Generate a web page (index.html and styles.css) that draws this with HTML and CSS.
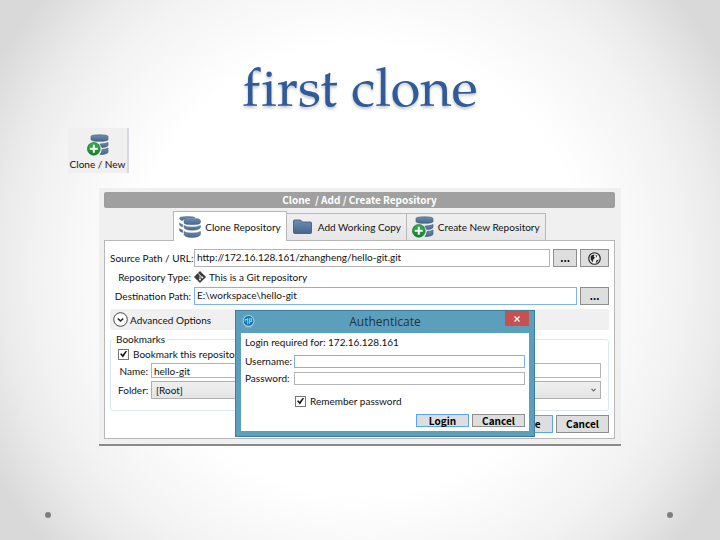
FILE: index.html
```html
<!DOCTYPE html>
<html lang="en">
<head>
<meta charset="utf-8">
<title>first clone</title>
<link rel="stylesheet" href="styles.css">
</head>
<body>
<svg class="defs" aria-hidden="true">
  <defs>
    <linearGradient id="steel" x1="0" y1="0" x2="0" y2="1"><stop offset="0" stop-color="#6d8fb5"/><stop offset="1" stop-color="#46658a"/></linearGradient>
    <linearGradient id="green" x1="0" y1="0" x2="0" y2="1"><stop offset="0" stop-color="#35b04a"/><stop offset="1" stop-color="#12802a"/></linearGradient>
    <symbol id="db-add" viewBox="0 0 22 22">
      <g fill="url(#steel)" stroke="#3c5573" stroke-width=".6">
        <path d="M4 2.500Q4 .8 12.500 .8T21 2.500V5.500Q21 7.300 12.500 7.300T4 5.500Z"/>
        <path d="M13 10Q19 9.800 21 8.500V11.500Q20 13.300 14.800 13.600Z"/>
        <path d="M15 15.500Q19 15.300 21 14V18.500Q19 20.500 13 20.600Q15 18.500 15 15.500Z"/>
      </g>
      <circle cx="6.800" cy="14.800" r="6.400" fill="url(#green)" stroke="#0c7424" stroke-width=".6"/>
      <path d="M6.800 10.800V18.800M2.800 14.800H10.800" stroke="#fff" stroke-width="2"/>
    </symbol>
  </defs>
</svg>
<main class="slide">
  <h1 class="headline">first clone</h1>
  <button class="tile" type="button">
    <svg class="tile-icon"><use href="#db-add"/></svg>
    <span>Clone / New</span>
  </button>

  <section class="window">
    <h2 class="window-title">Clone&nbsp; / Add / Create Repository</h2>
    <nav class="tabs">
      <button class="tab tab-active" type="button">
        <svg class="tab-icon" viewBox="0 0 22 22">
          <g fill="url(#steel)" stroke="#3c5573" stroke-width=".4">
            <path d="M.5 2.300Q.5 .5 8 .5T16 1.800Q8 1.200 4.300 3.500L3.500 4.800Q.5 4 .5 2.300Z"/>
            <path d="M.5 7Q2 8.300 3.700 8.500V11Q.5 10.300 .5 8.800ZM.5 12.500Q2 13.800 3.700 14V16.500Q.5 15.800 .5 14.300Z"/>
            <path d="M5 4.500Q5 2.300 13 2.300T21.500 4.500V6.500Q21.500 8.700 13 8.700T5 6.500Z"/>
            <path d="M5 9.500Q8 11 13 11T21.500 9.500V11.500Q20 14.200 13 14.200T5 11.500Z"/>
            <path d="M5 15.500Q8 17 13 17T21.500 15.500V18.500Q20 21.500 13 21.500T5 18.500Z"/>
          </g>
        </svg>
        <span>Clone Repository</span>
      </button>
      <button class="tab" type="button">
        <svg class="tab-icon" viewBox="0 0 22 22"><path d="M1.500 5Q1.500 4 2.500 4H8.500L10.500 6H18.500Q19.500 6 19.500 7V16.500Q19.500 17.500 18.500 17.500H2.500Q1.500 17.500 1.500 16.500Z" fill="url(#steel)" stroke="#3c5573" stroke-width=".8"/></svg>
        <span>Add Working Copy</span>
      </button>
      <button class="tab" type="button">
        <svg class="tab-icon"><use href="#db-add"/></svg>
        <span>Create New Repository</span>
      </button>
    </nav>

    <form class="panel">
      <div class="source">
        <label class="caption" for="source">Source Path / URL:</label>
        <div class="line">
          <input class="field" id="source" type="text" value="http://172.16.128.161/zhangheng/hello-git.git">
          <button class="btn btn-dots" type="button">...</button>
          <button class="btn btn-side" type="button" aria-label="Browse remote">
            <svg class="globe" viewBox="0 0 12 12"><circle cx="6" cy="6" r="5.300" fill="#eee" stroke="#222" stroke-width="1.100"/><path d="M2.500 4Q4 2 6 2.300L5.300 4.300L6.500 5.300L4.800 7L4.500 9.500Q2 7.500 2.500 4ZM7 2.500L8.500 3.500L7.500 5ZM8 7.500L10 7L8 10L7.200 9.500Z" fill="#222"/></svg>
          </button>
        </div>
        <span class="caption">Repository Type:</span>
        <div class="line kind">
          <svg class="git" viewBox="0 0 12 12"><path d="M6 .2L11.800 6L6 11.800L.2 6Z" fill="#3c3c3c" stroke="#3c3c3c" stroke-width=".4" stroke-linejoin="round"/><path d="M4.300 2.500L6 4.200V8.500M6 4.500L8.200 6.500" fill="none" stroke="#fff" stroke-width=".8"/><circle cx="6" cy="8.600" r=".9" fill="#fff"/><circle cx="8.300" cy="6.400" r=".9" fill="#fff"/></svg>
          <span>This is a Git repository</span>
        </div>
        <label class="caption" for="dest">Destination Path:</label>
        <div class="line">
          <input class="field field-focus" id="dest" type="text" value="E:\workspace\hello-git">
          <button class="btn btn-side" type="button">...</button>
        </div>
      </div>

      <button class="advanced" type="button">
        <svg class="chevron" viewBox="0 0 15 15"><circle cx="7.500" cy="7.500" r="6.800" fill="#fff" stroke="#333" stroke-width=".9"/><path d="M4.800 6.500L7.500 9L10.200 6.500" fill="none" stroke="#222" stroke-width="1.600"/></svg>
        <span>Advanced Options</span>
      </button>

      <fieldset class="bookmarks">
        <legend class="legend">Bookmarks</legend>
        <label class="check"><input class="box" type="checkbox" checked><span>Bookmark this repository</span></label>
        <div class="pairs">
          <label class="caption" for="name">Name:</label>
          <input class="field field-small" id="name" type="text" value="hello-git">
          <label class="caption" for="folder">Folder:</label>
          <div class="pick">
            <select class="select" id="folder"><option>[Root]</option></select>
            <svg class="arrow" viewBox="0 0 5 4"><path d="M.5 .8L2.500 2.800L4.500 .8" fill="none" stroke="#666" stroke-width="1.200"/></svg>
          </div>
        </div>
      </fieldset>

      <div class="actions">
        <button class="btn btn-main btn-default" type="button">Clone</button>
        <button class="btn btn-main" type="button">Cancel</button>
      </div>
    </form>

    <div class="modal" role="dialog" aria-labelledby="auth-title">
      <header class="modal-bar">
        <svg class="app-icon" viewBox="0 0 12 12"><path d="M4 9H8L9.500 11.700H2.500Z" fill="#8ea6b4"/><circle cx="6" cy="5.500" r="5" fill="#1272ac" stroke="#b5cfdb"/><path d="M5.300 2.500V8.500M3 6V4.300H5M7 8V3.500H8.800V6H7" fill="none" stroke="#6fdcf5" stroke-width="1"/></svg>
        <h3 class="modal-title" id="auth-title">Authenticate</h3>
        <button class="close" type="button" aria-label="Close"><svg class="cross" viewBox="0 0 6 6"><path d="M.5 .5L5.500 5.500M5.500 .5L.5 5.500" stroke="#fff" stroke-width="1.300"/></svg></button>
      </header>
      <form class="modal-body">
        <p class="note">Login required for: 172.16.128.161</p>
        <div class="login">
          <label for="user">Username:</label>
          <input class="field field-login field-focus" id="user" type="text">
          <label for="pass">Password:</label>
          <input class="field field-login" id="pass" type="password">
        </div>
        <label class="check remember"><input class="box" type="checkbox" checked><span>Remember password</span></label>
        <div class="modal-actions">
          <button class="btn btn-login btn-default" type="button">Login</button>
          <button class="btn btn-login" type="button">Cancel</button>
        </div>
      </form>
    </div>
  </section>

  <footer class="dots"><span class="dot"></span><span class="dot"></span></footer>
</main>
</body>
</html>
```
FILE: styles.css
```css
* { box-sizing: border-box; }
body { margin: 0; }
.defs { position: absolute; width: 0; height: 0; }
button, input, select { font: inherit; color: inherit; margin: 0; border-radius: 0; }
button { white-space: nowrap; }
svg { display: block; flex: none; }

.slide {
  min-height: 100vh;
  display: flex;
  flex-direction: column;
  font: 10px/14px Lato, "Open Sans", sans-serif;
  color: #111;
  background: radial-gradient(circle farthest-corner, #fff 50%, #f3f3f3 71%, #ebebeb 80%, #d9d9d9 93%);
}
.headline {
  margin: 60px 0 0;
  text-align: center;
  font: 54px/68px "Palatino Linotype", "TeX Gyre Pagella", Palatino, "Liberation Serif", serif;
  font-variant-ligatures: none;
  color: #2f5b9b;
  text-shadow: 0 2px 3px rgba(0, 0, 0, .25);
}
.tile {
  align-self: flex-start;
  margin-left: 68px;
  width: 61px;
  height: 45px;
  padding: 6px 0 0;
  border: 0;
  border-right: 2px solid #d5d8dc;
  background: #f0f0f0;
  display: flex;
  flex-direction: column;
  align-items: center;
  gap: 1px;
}
.tile-icon { width: 22px; height: 22px; }

.window {
  position: relative;
  margin: 15px 99px 0;
  padding: 4px 6px 5px 5px;
  background: #f0f0f0;
  border-bottom: 2px solid #8a8a8a;
}
.window-title {
  margin: 0;
  border-radius: 2px;
  background: #a0a0a0;
  color: #fff;
  text-align: center;
  font: bold 10px/16px "Noto Sans CJK SC", "Open Sans", sans-serif;
}
.tabs {
  display: flex;
  justify-content: center;
  align-items: flex-end;
  padding-top: 3px;
}
.tab {
  display: flex;
  align-items: center;
  gap: 4px;
  height: 27px;
  padding: 0 5px;
  border: 1px solid #b8b8b8;
  border-left: 0;
  border-bottom: 0;
  background: linear-gradient(#f0f0f0, #e6e6e6);
}
.tab-active {
  position: relative;
  height: 30px;
  margin-bottom: -1px;
  border-left: 1px solid #b8b8b8;
  background: #fff;
}
.tab-icon { width: 22px; height: 22px; }

.panel {
  padding: 8px 5px 5px;
  border: 1px solid #b8b8b8;
  background: #fff;
}
.source {
  display: grid;
  grid-template-columns: 81px 1fr;
  column-gap: 3px;
  align-items: center;
}
.caption { text-align: right; white-space: nowrap; }
.line { display: flex; gap: 3px; }
.kind { align-items: center; height: 20px; }
.git { width: 12px; height: 12px; }
.field {
  flex: 1;
  min-width: 0;
  width: 100%;
  height: 18px;
  padding: 0 2px 2px;
  border: 1px solid #b4b4b4;
  background: #fff;
  outline: 0;
}
.field-focus { border-color: #7eb4ea; }
.btn {
  display: flex;
  align-items: center;
  justify-content: center;
  height: 18px;
  padding: 0;
  border: 1px solid #8e8e8e;
  background: #dedede;
  color: #000;
  font-family: "Noto Sans CJK SC", "Open Sans", sans-serif;
  font-weight: bold;
}
.btn-dots { width: 24px; }
.btn-side { width: 29px; }
.btn-default { border-color: #5aa5f0; }
.globe { width: 13px; height: 13px; }

.advanced {
  display: flex;
  align-items: center;
  gap: 2px;
  width: 100%;
  height: 21px;
  margin-top: 4px;
  padding: 0 3px;
  border: 0;
  border-radius: 2px;
  background: #f0f0f0;
}
.chevron { width: 15px; height: 15px; }

.bookmarks {
  min-width: 0;
  margin: 2px 0 0;
  padding: 0 7px 11px;
  border: 1px solid #dce6ec;
  border-radius: 3px;
}
.legend { margin-left: -4px; padding: 0 2px; }
.check { display: flex; align-items: center; gap: 4px; height: 16px; }
.box {
  appearance: none;
  width: 11px;
  height: 11px;
  border: 1px solid #777;
  background: #fff;
  display: grid;
  place-items: center;
}
.box:checked::before {
  content: "";
  width: 7px;
  height: 7px;
  background: #111;
  clip-path: polygon(0 50%, 18% 38%, 38% 62%, 85% 0, 100% 12%, 42% 100%);
}
.pairs {
  display: grid;
  grid-template-columns: 30px 1fr;
  gap: 3px;
  align-items: center;
  margin-top: 1px;
}
.field-small { height: 15px; padding-bottom: 0; }
.pick { display: grid; align-items: center; }
.select {
  grid-area: 1 / 1;
  appearance: none;
  width: 100%;
  height: 18px;
  padding: 0 4px;
  border: 1px solid #b0b0b0;
  background: linear-gradient(#efefef, #e4e4e4);
}
.arrow {
  grid-area: 1 / 1;
  justify-self: end;
  width: 5px;
  height: 4px;
  margin-right: 5px;
  pointer-events: none;
}
.actions { display: flex; justify-content: flex-end; gap: 3px; margin-top: 4px; }
.btn-main { width: 53px; }

.modal {
  position: absolute;
  left: 136px;
  top: 122px;
  width: 300px;
  padding: 0 5px 5px;
  border: 1px solid #3f7f9b;
  background: #5b9fbd;
}
.modal-bar { display: flex; align-items: flex-start; height: 22px; }
.app-icon { width: 13px; height: 13px; margin: 4px 0 0 1px; }
.modal-title {
  flex: 1;
  margin: 0 0 0 10px;
  text-align: center;
  font: 12px/22px "Open Sans", sans-serif;
  color: #23333b;
}
.close {
  display: grid;
  place-items: center;
  width: 24px;
  height: 15px;
  padding: 0;
  border: 0;
  background: #c75050;
}
.cross { width: 6px; height: 6px; }
.modal-body { padding: 2px 4px 4px; background: #fff; }
.note { margin: 0; }
.login {
  display: grid;
  grid-template-columns: 46px 1fr;
  gap: 3px;
  align-items: center;
  margin-top: 5px;
}
.field-login { height: 13px; padding: 0 2px; }
.remember { margin: 8px 0 0 50px; }
.modal-actions { display: flex; justify-content: flex-end; gap: 3px; margin-top: 5px; }
.btn-login { width: 53px; height: 13px; line-height: 11px; }

.dots { display: flex; justify-content: space-between; margin-top: auto; padding: 0 47px 22px 45px; }
.dot { width: 6px; height: 6px; border-radius: 50%; background: #7f7f7f; }
```
